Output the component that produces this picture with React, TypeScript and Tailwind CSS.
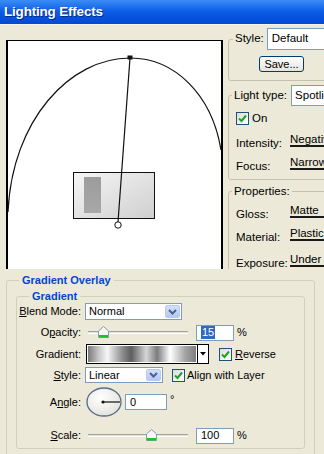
import type { ReactNode } from 'react';

const font = "font-['Liberation_Sans',Arial,sans-serif]";

function Check() {
  return (
    <span className="flex h-[13px] w-[13px] shrink-0 items-center justify-center border border-[#1c5180] bg-gradient-to-br from-[#dcdcd5] to-white">
      <svg width="9" height="9" viewBox="0 0 9 9">
        <path d="M1 4.5 L3.5 7 L8 1.5" fill="none" stroke="#21a121" strokeWidth="2" />
      </svg>
    </span>
  );
}

function ComboArrow() {
  return (
    <span className="m-[1px] flex w-[15px] items-center justify-center rounded-[2px] border border-[#b9cbf3] bg-gradient-to-b from-[#d3e0fb] to-[#b4c8f6]">
      <svg width="9" height="6" viewBox="0 0 9 6">
        <path d="M1 1 L4.5 4.5 L8 1" fill="none" stroke="#4d6185" strokeWidth="2" />
      </svg>
    </span>
  );
}

function Combo({ value, w, h }: { value: string; w: string; h: string }) {
  return (
    <div className={`flex ${w} ${h} border border-[#7f9db9] bg-white`}>
      <span className="flex-1 self-center pl-[3px] leading-none">{value}</span>
      <ComboArrow />
    </div>
  );
}

function Slider({ thumb }: { thumb: number }) {
  return (
    <div className="relative h-full w-[100px]">
      <div className="absolute left-0 right-0 top-[7px] h-[3px] border-t border-b border-[#a3a29c] border-b-white bg-[#e4e2d6]" />
      <svg className="absolute top-[2px]" style={{ left: thumb }} width="11" height="12" viewBox="0 0 11 12">
        <path d="M0.5 5 L5.5 0.5 L10.5 5 V11.5 H0.5 Z" fill="#f7f7f4" stroke="#8a9aa6" />
        <rect x="1" y="9" width="9" height="2.5" fill="#21c121" />
      </svg>
    </div>
  );
}

function NumBox({ children, w }: { children: ReactNode; w: string }) {
  return (
    <div className={`flex h-[16px] ${w} items-center border border-[#7f9db9] bg-white pl-[4px]`}>
      {children}
    </div>
  );
}

function Row({ label, className, children }: { label: ReactNode; className: string; children: ReactNode }) {
  return (
    <div className={`flex items-center ${className}`}>
      <span className="w-[64px] shrink-0 text-right">{label}</span>
      {children}
    </div>
  );
}

function LightRow({ label, value, className }: { label: string; value: string; className: string }) {
  return (
    <div className={`flex h-[22px] items-center ${className}`}>
      <span className="w-[54px] shrink-0">{label}</span>
      <span className="mb-[7px] flex-1 border-b-2 border-[#1a1a1a] leading-[12px]">{value}</span>
    </div>
  );
}

export default function App() {
  return (
    <div className={`h-[454px] w-[324px] overflow-hidden bg-[#ece9d8] text-black ${font}`}>
      {/* Title bar */}
      <div className="flex h-[25px] items-center border-b border-[#f5f4ee] bg-gradient-to-b from-[#3b8cf5] via-[#0a5ae6] to-[#0449d2] pl-[4px]">
        <span className="text-[13.5px] font-bold tracking-[-0.2px] text-white [text-shadow:1px_1px_0_#0b2a7a]">
          Lighting Effects
        </span>
      </div>

      {/* Lighting Effects body */}
      <div className="flex h-[244px] overflow-hidden">
        <div className="ml-[6px] mt-[15px] h-[240px] w-[217px] shrink-0 border-x-2 border-t border-black bg-white">
          <svg width="213" height="239" viewBox="8 41 213 239">
            <defs>
              <linearGradient id="box" x1="0" y1="0" x2="1" y2="1">
                <stop offset="0" stopColor="#f6f6f6" />
                <stop offset="1" stopColor="#cfcfcf" />
              </linearGradient>
              <linearGradient id="bar" x1="0" y1="0" x2="0" y2="1">
                <stop offset="0" stopColor="#9c9c9c" />
                <stop offset="1" stopColor="#a8a8a8" />
              </linearGradient>
            </defs>
            <path d="M8 212 C12 120 70 58 130 58 C175 58 212 95 221 150" fill="none" stroke="#111" strokeWidth="1.2" />
            <rect x="73.5" y="172.5" width="81" height="46" fill="url(#box)" stroke="#111" />
            <rect x="84" y="177" width="17" height="36" fill="url(#bar)" />
            <line x1="130" y1="58" x2="118" y2="222" stroke="#111" strokeWidth="1.2" />
            <rect x="127.5" y="55.5" width="5" height="4" fill="#111" />
            <circle cx="118" cy="225" r="3.2" fill="#fff" stroke="#111" />
          </svg>
        </div>

        <div className="w-[101px] shrink-0 text-[11.5px]">
          <fieldset className="ml-[5px] mt-[3px] w-[150px] rounded-[3px] border border-[#c4c1b1] pb-[8px]">
            <legend className="ml-[4px] flex items-center whitespace-nowrap px-[2px]">
              <span className="shrink-0">Style:</span>
              <span className="ml-[3px] flex h-[22px] w-[80px] shrink-0 items-center border border-[#7f9db9] bg-white pl-[4px]">
                Default
              </span>
            </legend>
            <button className="ml-[30px] mt-[6px] flex h-[16px] w-[45px] items-center justify-center rounded-[3px] border border-[#003c74] bg-gradient-to-b from-white to-[#e6e4da] text-[11px]">
              Save...
            </button>
          </fieldset>

          <fieldset className="ml-[5px] mt-[4px] w-[150px] rounded-[3px] border border-[#c4c1b1] pb-[2px] pl-[7px]">
            <legend className="-ml-[4px] flex items-center whitespace-nowrap px-[2px]">
              <span className="shrink-0">Light type:</span>
              <span className="ml-[4px] flex h-[21px] w-[60px] shrink-0 items-center border border-[#7f9db9] bg-white pl-[3px]">
                Spotlight
              </span>
            </legend>
            <div className="mt-[4px] flex items-center">
              <Check />
              <span className="ml-[3px]">On</span>
            </div>
            <LightRow label="Intensity:" value="Negative" className="mt-[5px]" />
            <LightRow label="Focus:" value="Narrow" className="mt-[1px]" />
          </fieldset>

          <fieldset className="ml-[5px] mt-[4px] w-[150px] rounded-[3px] border border-[#c4c1b1] pl-[7px]">
            <legend className="-ml-[4px] whitespace-nowrap px-[2px] leading-[14px]">Properties:</legend>
            <LightRow label="Gloss:" value="Matte" className="mt-[5px]" />
            <LightRow label="Material:" value="Plastic" className="mt-[1px]" />
            <LightRow label="Exposure:" value="Under" className="mt-[4px]" />
          </fieldset>
        </div>
      </div>

      {/* Gradient Overlay panel */}
      <div className="h-[185px] overflow-hidden text-[11px]">
        <fieldset className="ml-[6px] mt-[4px] w-[309px] rounded-[3px] border border-[#d0d0bf] pb-[10px]">
          <legend className="ml-[12px] px-[3px] text-[11px] font-bold leading-[14px] text-[#0046d5]">
            Gradient Overlay
          </legend>
          <fieldset className="ml-[9px] mt-[2px] w-[289px] rounded-[3px] border border-[#d0d0bf] pb-[4px]">
            <legend className="ml-[12px] px-[3px] text-[11px] font-bold leading-[14px] text-[#0046d5]">
              Gradient
            </legend>

            <Row label={<><u>B</u>lend Mode:</>} className="h-[17px]">
              <div className="ml-[4px]">
                <Combo value="Normal" w="w-[97px]" h="h-[17px]" />
              </div>
            </Row>

            <Row label={<>O<u>p</u>acity:</>} className="mt-[4px] h-[17px]">
              <div className="ml-[7px] h-full">
                <Slider thumb={10} />
              </div>
              <div className="ml-[8px]">
                <NumBox w="w-[38px]">
                  <span className="bg-[#316ac5] px-[1px] leading-[13px] text-white">15</span>
                </NumBox>
              </div>
              <span className="ml-[3px]">%</span>
            </Row>

            <Row label="Gradient:" className="mt-[3px] h-[20px]">
              <div className="ml-[5px] flex h-[20px] border border-black">
                <div className="w-[110px] border border-white bg-[linear-gradient(to_right,#7a7a7a_0%,#c8c8c8_10%,#f6f6f6_18%,#8c8c8c_32%,#5e5e5e_40%,#d6d6d6_54%,#7c7c7c_64%,#ffffff_76%,#a4a4a4_90%,#7e7e7e_100%)]" />
                <div className="flex w-[11px] items-center justify-center border-l border-black bg-white">
                  <svg width="6" height="4" viewBox="0 0 6 4">
                    <path d="M0 0 H6 L3 3.5 Z" fill="#000" />
                  </svg>
                </div>
              </div>
              <div className="ml-[10px]">
                <Check />
              </div>
              <span className="ml-[3px]">
                <u>R</u>everse
              </span>
            </Row>

            <Row label={<><u>S</u>tyle:</>} className="mt-[3px] h-[16px]">
              <div className="ml-[4px]">
                <Combo value="Linear" w="w-[78px]" h="h-[16px]" />
              </div>
              <div className="ml-[9px]">
                <Check />
              </div>
              <span className="ml-[2px]">Align with Layer</span>
            </Row>

            <Row label={<>A<u>n</u>gle:</>} className="mt-[4px] h-[30px]">
              <svg className="ml-[5px]" width="36" height="30" viewBox="0 0 36 30">
                <defs>
                  <radialGradient id="dial" cx="0.4" cy="0.35" r="0.7">
                    <stop offset="0" stopColor="#ffffff" />
                    <stop offset="1" stopColor="#e2e2dc" />
                  </radialGradient>
                </defs>
                <ellipse cx="18" cy="15" rx="17" ry="14" fill="url(#dial)" stroke="#5a6a8a" strokeWidth="1.3" />
                <line x1="17" y1="15" x2="34" y2="15" stroke="#111" strokeWidth="1.2" />
                <circle cx="17" cy="15" r="1.6" fill="#111" />
              </svg>
              <div className="ml-[3px]">
                <NumBox w="w-[42px]">0</NumBox>
              </div>
              <span className="mb-[6px] ml-[3px]">°</span>
            </Row>

            <Row label={<><u>S</u>cale:</>} className="mt-[10px] h-[17px]">
              <div className="ml-[7px] h-full">
                <Slider thumb={58} />
              </div>
              <div className="ml-[8px]">
                <NumBox w="w-[38px]">100</NumBox>
              </div>
              <span className="ml-[3px]">%</span>
            </Row>
          </fieldset>
        </fieldset>
      </div>
    </div>
  );
}
